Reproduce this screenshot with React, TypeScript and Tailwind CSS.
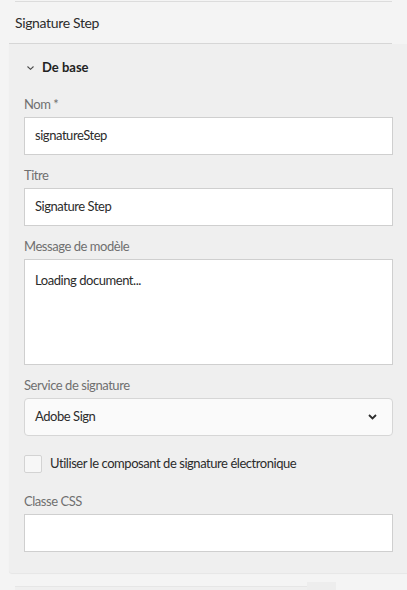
import { useState } from 'react';

const FONT = { fontFamily: 'Lato, "Noto Sans", sans-serif' };

function FieldLabel({ children }: { children: React.ReactNode }) {
  return <div className="mb-1 h-[18px] text-[13px] leading-[18px] tracking-[-0.45px] text-[#707070]">{children}</div>;
}

function TextField({ label, value }: { label: string; value: string }) {
  return (
    <div>
      <FieldLabel>{label}</FieldLabel>
      <div className="flex h-[38px] items-center border border-[#cfcfcf] bg-white px-[10px] text-[13px] tracking-[-0.45px] text-[#2c2c2c]">
        {value}
      </div>
    </div>
  );
}

export default function App() {
  const [checked, setChecked] = useState(false);

  return (
    <div className="h-[590px] w-[407px] overflow-hidden bg-[#f4f4f4]" style={FONT}>
      <div className="mt-px ml-[15px] w-[377px] border-t border-[#dcdcdc]">
        <div className="flex h-[41px] items-center text-[14px] tracking-[-0.35px] text-[#2c2c2c]">Signature Step</div>
      </div>
      <div className="ml-[9px] h-px w-[383px] bg-[#d6d6d6]" />

      <section className="ml-[9px] w-[400px] rounded-bl-[3px] bg-[#efefef] pr-[16px] pb-[21px] pl-[15px] shadow-[0_1px_1px_rgba(0,0,0,0.06)]">
        <div className="flex h-[51px] items-center gap-[8px] pb-[3px] pl-[3px]">
          <svg width="7" height="4" viewBox="0 0 7 4" className="text-[#4b4b4b]">
            <path d="M0.5 0.5 L3.5 3.3 L6.5 0.5" fill="none" stroke="currentColor" strokeWidth="1.1" />
          </svg>
          <span className="text-[13px] font-bold text-[#222]">De base</span>
        </div>

        <div className="flex flex-col gap-[11px]">
          <TextField label="Nom *" value="signatureStep" />
          <TextField label="Titre" value="Signature Step" />

          <div>
            <FieldLabel>Message de modèle</FieldLabel>
            <div className="h-[106px] border border-[#cfcfcf] bg-white px-[10px] pt-[11px] text-[13px] leading-[18px] tracking-[-0.45px] text-[#2c2c2c]">
              Loading document...
            </div>
          </div>

          <div>
            <FieldLabel>Service de signature</FieldLabel>
            <div className="flex h-[38px] items-center justify-between rounded-[4px] border border-[#d6d6d6] bg-[#fafafa] pr-[15px] pl-[10px] text-[13px] tracking-[-0.45px] text-[#2c2c2c]">
              <span>Adobe Sign</span>
              <svg width="9" height="6" viewBox="0 0 9 6" className="text-[#2c2c2c]">
                <path d="M1 1 L4.5 4.5 L8 1" fill="none" stroke="currentColor" strokeWidth="1.8" />
              </svg>
            </div>
          </div>

          <label className="flex h-[34px] cursor-pointer items-center gap-[8px]">
            <span
              onClick={() => setChecked(!checked)}
              className="h-[18px] w-[18px] rounded-[2px] border border-[#d3d3d3] bg-[#f7f7f7]"
            />
            <span className="text-[13px] tracking-[-0.45px] text-[#2c2c2c]">
              Utiliser le composant de signature électronique
            </span>
          </label>

          <TextField label="Classe CSS" value="" />
        </div>
      </section>

      <div className="mt-[9px] flex items-end">
        <div className="ml-[15px] h-[4px] w-[292px] border-t border-[#e6e6e6] bg-[#efefef]" />
        <div className="h-[8px] w-[29px] bg-[#ededed]" />
      </div>
    </div>
  );
}
